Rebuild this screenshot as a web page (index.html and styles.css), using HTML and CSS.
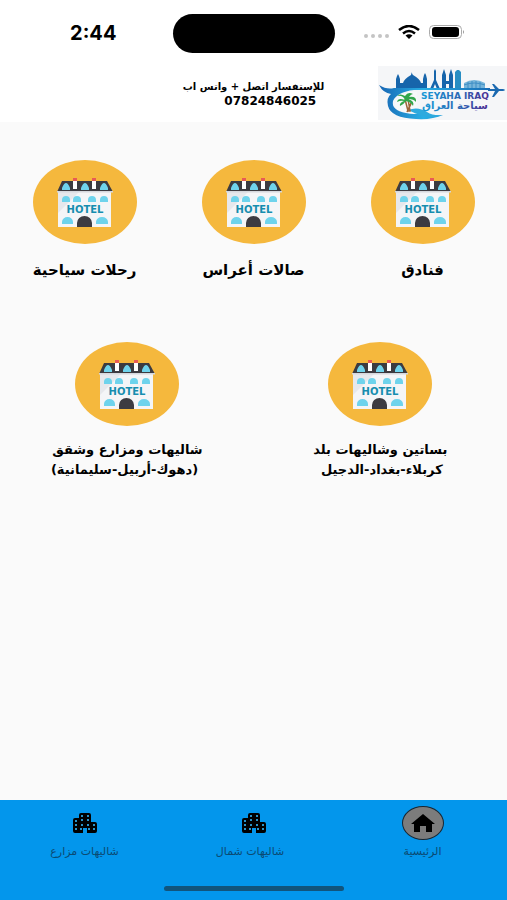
FILE: index.html
```html
<!DOCTYPE html>
<html lang="ar" dir="rtl">
<head>
    <meta charset="UTF-8">
    <meta name="viewport" content="width=device-width, initial-scale=1">
    <title>سياحة العراق</title>
    <link rel="stylesheet" href="styles.css">
</head>
<body>
    <svg class="symbols" aria-hidden="true">
        <symbol id="hotel" viewBox="0 0 104 84">
            <ellipse cx="52" cy="42" rx="52" ry="42" fill="#f5b83d"/>
            <path d="M25 32h53v35H25z" fill="#f4f5f7"/>
            <path d="M25 53l21-21H25z" fill="#e6e8ec"/>
            <path d="M29 21h45l6 11H24z" fill="#3c3b41"/>
            <path d="M24 31h56v1.500H24z" fill="#d5d8dd"/>
            <path d="M40 20h4v9h-4zM59 20h4v9h-4z" fill="#fff"/>
            <path d="M40 18h4v3h-4zM59 18h4v3h-4z" fill="#e85b54"/>
            <g fill="#6ed3ec">
                <path d="M29 30v-2q2-5 4-5t4 5v2zM48 30v-2q2-5 4-5t4 5v2zM67 30v-2q2-5 4-5t4 5v2z"/>
                <path d="M29 42v-2a4 4 0 0 1 8 0v2zM40 42v-2a4 4 0 0 1 8 0v2zM55 42v-2a4 4 0 0 1 8 0v2zM67 42v-2a4 4 0 0 1 8 0v2z"/>
                <path d="M29 64v-2a5.500 5 0 0 1 11 0v2zM63 64v-2a6 5 0 0 1 12 0v2z"/>
            </g>
            <path d="M44 67v-4a7.500 7 0 0 1 15 0v4z" fill="#3c3b41"/>
            <text class="hotel-text" x="52" y="53" text-anchor="middle" direction="ltr">HOTEL</text>
        </symbol>
        <symbol id="city" viewBox="0 0 24 20">
            <path fill="#000" fill-rule="evenodd" d="M2 5h4V2q0-2 2-2h8q2 0 2 2v7h4q2 0 2 2v7q0 2-2 2h-8v-5h-4v5H2q-2 0-2-2V7q0-2 2-2z"/>
            <path fill="#2a93c8" d="M8 2h2v2H8zM14 2h2v2h-2zM8 6h2v2H8zM14 6h2v2h-2zM2 7h2v2H2zM2 11h2v2H2zM8 11h2v2H8zM14 11h2v2h-2zM20 11h2v2h-2zM2 15h2v2H2zM20 15h2v2h-2zM7 15h2v2H7zM15 15h2v2h-2z"/>
        </symbol>
    </svg>

    <div class="status-bar" dir="ltr">
        <span class="time">2:44</span>
        <div class="island"></div>
        <div class="signals">
            <svg width="26" height="6" viewBox="0 0 26 6" fill="#c4c4c4"><circle cx="3" cy="3" r="2"/><circle cx="10" cy="3" r="2"/><circle cx="17" cy="3" r="2"/><circle cx="24" cy="3" r="2"/></svg>
            <svg class="wifi" width="22" height="14" viewBox="0 0 22 14" fill="none" stroke="#000" stroke-width="2.500"><path d="M1 5Q11-3 21 5M5 8.500Q11 3.500 17 8.500"/><path d="M7.500 10.500Q11 8 14.500 10.500L11 14z" fill="#000" stroke="none"/></svg>
            <svg class="battery" width="36" height="14" viewBox="0 0 36 14"><rect x=".5" y=".5" width="32" height="13" rx="4" fill="#fff" stroke="#aaa"/><rect x="3" y="2" width="27" height="10" rx="3"/><path d="M34 5q2 2 0 4z" fill="#999"/></svg>
        </div>
    </div>

    <header class="header">
        <svg class="logo" viewBox="0 0 129 54" role="img" aria-label="Seyaha Iraq">
            <defs>
                <linearGradient id="wave"><stop stop-color="#1766b4"/><stop offset=".4" stop-color="#28aee4"/><stop offset="1" stop-color="#176bb5"/></linearGradient>
                <linearGradient id="ink"><stop stop-color="#1a9bd7"/><stop offset=".55" stop-color="#2968b5"/><stop offset="1" stop-color="#4b2d92"/></linearGradient>
            </defs>
            <rect width="129" height="54" fill="#f5f6f8"/>
            <g fill="#1765ab">
                <path d="M18 23V13l1-3 1-2 1 2 1 3v4h3q1-4 8-8 1-4 1-2 0 1 1 2 7 4 8 8h2v-4l1-4 1-2 1 2 1 4v10z"/>
                <path d="M52 23l4-9V5l1-2 1 2v9l4 9h-3l-2-5-2 5z"/>
                <path d="M64 23V9l2-6 2 6v6h3V9l2-6 2 6v14h-4v-5h-3v5z"/>
                <path d="M77 23V6l2-2h2l2 2v17z" fill="#278dc3"/>
            </g>
            <path d="M86 17q10-6 21 0v6H86z" fill="#77b5da"/>
            <path d="M86 19q10-4 21 0M90 16v7M94 15v8M98 15v8M102 16v7" fill="none" stroke="#3f8ec5"/>
            <path d="M1 19q8 5 15 3H112v2H36Q19 26 15 35q-2 9 13 12 8 2 15 0 8 3 22 2-11 5-27 4-25-1-28-13-2-8 3-12Q5 27 1 19z" fill="url(#wave)"/>
            <path d="M17 38q2-8 14-12h8v18l5 2q-16 2-25-3z" fill="#f7f9fa"/>
            <path d="M30 44q10-4 19 2 6 4 16 3-13 4-23 0-6-2-12-5z" fill="#2eaade"/>
            <path d="M27 33l3 12h2l-2-12M33 37l-4 9 4-8" fill="none" stroke="#9b6336" stroke-width="1.500"/>
            <path d="M27 34q-7-3-8 2 4-2 7-1-5 2-4 5 4-2 6-5 5 1 7 5 2-5-5-7 6 0 8 3 1-6-7-5 2-3 4-3-5-3-8 2-5-3-8 0 6-1 8 4z" fill="#31a64b"/>
            <path d="M110 23h7l-3-5h2l5 5h4q4 1 0 2h-4l-5 6h-2l3-6h-7z" fill="#1b69b0"/>
            <text class="logo-en" x="77" y="33" text-anchor="middle" direction="ltr" fill="url(#ink)">SEYAHA IRAQ</text>
            <text class="logo-ar" x="77" y="43" text-anchor="middle" fill="url(#ink)">سياحة العراق</text>
        </svg>
        <p class="contact">للإستفسار اتصل + واتس اب<span class="phone">07824846025</span></p>
    </header>

    <main class="categories">
        <div class="row">
            <a class="category" href="#"><svg class="picture"><use href="#hotel"/></svg><span>فنادق</span></a>
            <a class="category" href="#"><svg class="picture"><use href="#hotel"/></svg><span>صالات أعراس</span></a>
            <a class="category" href="#"><svg class="picture"><use href="#hotel"/></svg><span>رحلات سياحية</span></a>
        </div>
        <div class="row small">
            <a class="category" href="#"><svg class="picture"><use href="#hotel"/></svg><span>بساتين وشاليهات بلد<br>&nbsp;كربلاء-بغداد-الدجيل</span></a>
            <a class="category" href="#"><svg class="picture"><use href="#hotel"/></svg><span>شاليهات ومزارع وشقق<br>&nbsp;(دهوك-أربيل-سليمانية)</span></a>
        </div>
    </main>

    <footer class="bottom">
        <nav class="tabs">
            <a class="tab active" href="#"><span class="tab-icon"><svg width="26" height="18" viewBox="0 0 26 18"><path d="M13 0L1 10h3v8h6v-6h6v6h6v-8h3z"/></svg></span>الرئيسية</a>
            <a class="tab" href="#"><span class="tab-icon"><svg width="24" height="20"><use href="#city"/></svg></span><span>&nbsp;&nbsp;شاليهات شمال</span></a>
            <a class="tab" href="#"><span class="tab-icon"><svg width="24" height="20"><use href="#city"/></svg></span>شاليهات مزارع</a>
        </nav>
        <div class="home-indicator"></div>
    </footer>
</body>
</html>
```

FILE: styles.css
```css
* {
    box-sizing: border-box;
}

body {
    margin: 0;
    min-height: 100vh;
    display: flex;
    flex-direction: column;
    background-color: #fafafa;
    color: #000;
    font-family: "DejaVu Sans", sans-serif;
}

a {
    color: inherit;
    text-decoration: none;
}

.symbols {
    display: none;
}

.status-bar {
    display: grid;
    grid-template-columns: 1fr 162px 1fr;
    align-items: center;
    height: 66px;
    background-color: #fff;
}

.time {
    padding-left: 14px;
    text-align: center;
    font: bold 20px Inter, sans-serif;
}

.island {
    height: 39px;
    border-radius: 20px;
    background-color: #000;
}

.signals {
    display: flex;
    justify-content: center;
    align-items: flex-end;
    gap: 9px;
    padding-right: 14px;
    padding-bottom: 2px;
}

.header {
    display: grid;
    grid-template-columns: 129px 1fr 129px;
    height: 56px;
    background-color: #fff;
}

.logo {
    width: 129px;
    height: 54px;
}

.logo-en {
    font: bold 9px "DejaVu Sans", sans-serif;
}

.logo-ar {
    font: bold 10px "DejaVu Sans", sans-serif;
}

.contact {
    justify-self: center;
    margin: 14px 0 0;
    font-size: 10px;
    font-weight: bold;
    line-height: 14px;
}

.phone {
    display: block;
    padding-right: 8px;
    font-size: 12px;
}

.categories {
    flex: 1;
    padding-top: 38px;
}

.row {
    display: flex;
    margin-bottom: 60px;
}

.category {
    flex: 1;
    display: flex;
    flex-direction: column;
    align-items: center;
    gap: 14px;
    font-size: 15px;
    font-weight: bold;
    line-height: 24px;
}

.small .category {
    font-size: 13px;
    line-height: 20px;
}

.picture {
    width: 104px;
    height: 84px;
}

.hotel-text {
    font: bold 10px "DejaVu Sans", sans-serif;
    fill: #168daf;
}

.bottom {
    display: flex;
    flex-direction: column;
    justify-content: space-between;
    align-items: center;
    height: 100px;
    padding: 6px 0 9px;
    background-color: #0396ec;
}

.tabs {
    display: flex;
    width: 100%;
}

.tab {
    flex: 1;
    display: flex;
    flex-direction: column;
    align-items: center;
    gap: 4px;
    font-size: 11px;
    line-height: 16px;
    color: #0b4a72;
}

.tab-icon {
    display: flex;
    justify-content: center;
    align-items: center;
    width: 42px;
    height: 34px;
}

.active .tab-icon {
    border: 1px solid #172733;
    border-radius: 50%;
    background-color: #7c7c7c;
}

.home-indicator {
    width: 180px;
    height: 5px;
    border-radius: 3px;
    background-color: #11547c;
}
```
